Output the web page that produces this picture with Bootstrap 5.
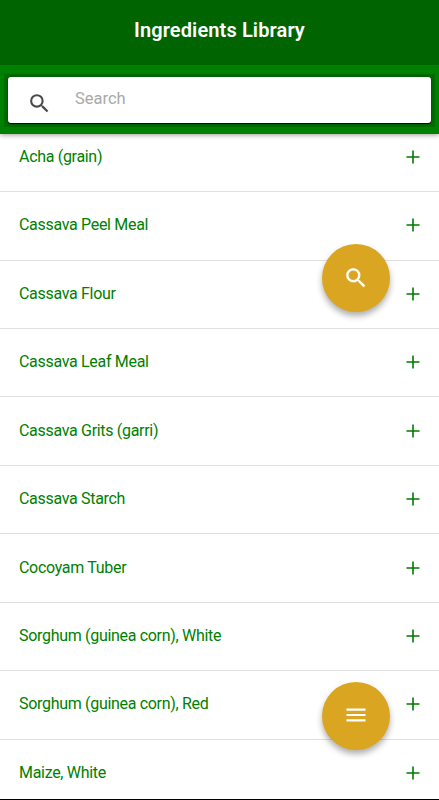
<!DOCTYPE html>
<html lang="en">
<head>
<meta charset="utf-8">
<meta name="viewport" content="width=device-width, initial-scale=1">
<title>Ingredients Library</title>
<link href="https://cdn.jsdelivr.net/npm/bootstrap@5.3.0/dist/css/bootstrap.min.css" rel="stylesheet">
<style>
body { font-family: Roboto, "Liberation Sans", sans-serif; }
.app-screen { height: 800px; border-bottom: 1px solid #000; }
.title-bar { height: 65px; background: #006400; padding-bottom: 5px; z-index: 3; }
.title-bar h1 { font-size: 20px; font-weight: 600; line-height: 24px; letter-spacing: .12px; }
.search-bar { height: 69px; background: #008000; padding: 9px 4px 7px; box-shadow: 0 1px 5px rgba(0,0,0,.4); z-index: 2; }
.search-frame { background: #006c00; padding: 3px 4px 4px; }
.search-box { height: 46px; border-radius: 3px; padding-left: 19px; box-shadow: 0 1px 1px #001000, 0 0 3px rgba(0,50,0,.5); }
.search-box svg { margin-top: 6px; }
.search-box input { font-size: 16.5px; line-height: 24px; margin: 0 12px 2px 23px; color: #444; }
.search-box input::placeholder { color: #a9a9a9; opacity: 1; }
.ingredients { margin-top: -10.3px; }
.ingredients .list-group-item { height: 68.44px; color: #008000; border-color: #e0e0e0; padding: 0 14px 1px 19px; font-size: 16px; letter-spacing: -.31px; background: #fff; }
.ingredients .list-group-item:last-child { border-bottom: 0; }
.fab { width: 68px; height: 68px; right: 49px; background: #daa520; z-index: 3; box-shadow: 0 4px 6px rgba(0,0,0,.32); }
.fab-search { top: 244px; }
.fab-menu { top: 682px; padding-bottom: 2px !important; }
</style>
</head>
<body>
<div class="app-screen position-relative overflow-hidden d-flex flex-column bg-white">
  <header class="title-bar position-relative d-flex align-items-center justify-content-center flex-shrink-0">
    <h1 class="text-white m-0">Ingredients Library</h1>
  </header>
  <div class="search-bar position-relative flex-shrink-0">
    <div class="search-frame">
      <div class="search-box bg-white d-flex align-items-center">
        <svg width="25" height="25" viewBox="0 0 24 24" fill="#4a4a4a" class="flex-shrink-0"><path d="M15.5 14h-.79l-.28-.27A6.47 6.47 0 0 0 16 9.5 6.5 6.5 0 1 0 9.5 16c1.61 0 3.09-.59 4.23-1.57l.27.28v.79l5 4.99L20.49 19l-4.99-5zm-6 0a4.5 4.5 0 1 1 0-9 4.5 4.5 0 0 1 0 9z"/></svg>
        <input type="text" class="border-0 p-0 flex-grow-1 bg-transparent" placeholder="Search" aria-label="Search">
      </div>
    </div>
  </div>
  <main class="flex-grow-1 overflow-hidden">
    <ul class="ingredients list-group list-group-flush">
      <li class="list-group-item d-flex align-items-center justify-content-between">Acha (grain)<svg width="24" height="24"><use href="#plus"/></svg></li>
      <li class="list-group-item d-flex align-items-center justify-content-between">Cassava Peel Meal<svg width="24" height="24"><use href="#plus"/></svg></li>
      <li class="list-group-item d-flex align-items-center justify-content-between">Cassava Flour<svg width="24" height="24"><use href="#plus"/></svg></li>
      <li class="list-group-item d-flex align-items-center justify-content-between">Cassava Leaf Meal<svg width="24" height="24"><use href="#plus"/></svg></li>
      <li class="list-group-item d-flex align-items-center justify-content-between">Cassava Grits (garri)<svg width="24" height="24"><use href="#plus"/></svg></li>
      <li class="list-group-item d-flex align-items-center justify-content-between">Cassava Starch<svg width="24" height="24"><use href="#plus"/></svg></li>
      <li class="list-group-item d-flex align-items-center justify-content-between">Cocoyam Tuber<svg width="24" height="24"><use href="#plus"/></svg></li>
      <li class="list-group-item d-flex align-items-center justify-content-between">Sorghum (guinea corn), White<svg width="24" height="24"><use href="#plus"/></svg></li>
      <li class="list-group-item d-flex align-items-center justify-content-between">Sorghum (guinea corn), Red<svg width="24" height="24"><use href="#plus"/></svg></li>
      <li class="list-group-item d-flex align-items-center justify-content-between">Maize, White<svg width="24" height="24"><use href="#plus"/></svg></li>
    </ul>
  </main>
  <button type="button" class="fab fab-search position-absolute border-0 rounded-circle p-0 d-flex align-items-center justify-content-center" aria-label="Search ingredients">
    <svg width="26" height="26" viewBox="0 0 24 24" fill="#fff" stroke="#fff" stroke-width=".2"><path d="M15.5 14h-.79l-.28-.27A6.47 6.47 0 0 0 16 9.5 6.5 6.5 0 1 0 9.5 16c1.61 0 3.09-.59 4.23-1.57l.27.28v.79l5 4.99L20.49 19l-4.99-5zm-6 0a4.5 4.5 0 1 1 0-9 4.5 4.5 0 0 1 0 9z"/></svg>
  </button>
  <button type="button" class="fab fab-menu position-absolute border-0 rounded-circle p-0 d-flex align-items-center justify-content-center" aria-label="Menu">
    <svg width="26" height="26" viewBox="0 0 24 24" fill="#fff"><path d="M3.2 18h17.6v-2H3.2v2zm0-5h17.6v-2H3.2v2zm0-7v2h17.6V6H3.2z"/></svg>
  </button>
</div>
<svg class="d-none"><symbol id="plus" viewBox="0 0 24 24"><path d="M12 5.5v13M5.5 12h13" stroke="#007a00" stroke-width="1.6" fill="none"/></symbol></svg>
<script src="https://cdn.jsdelivr.net/npm/bootstrap@5.3.0/dist/js/bootstrap.bundle.min.js"></script>
</body>
</html>
